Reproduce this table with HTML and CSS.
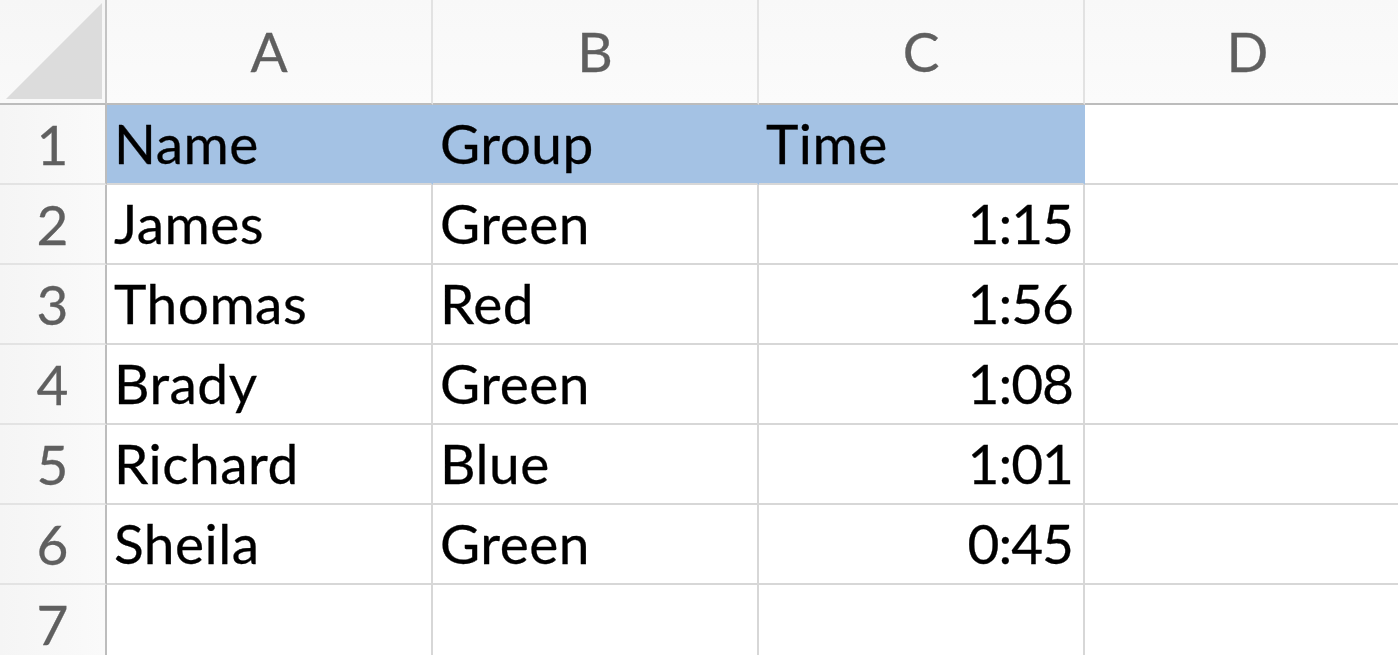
FILE: index.html
```html
<!DOCTYPE html>
<html lang="en">
<head>
<meta charset="utf-8">
<title>Sheet</title>
<link rel="stylesheet" href="styles.css">
</head>
<body>
<div class="sheet">
  <div class="corner"><svg class="tri" width="96" height="96" viewBox="0 0 96 96"><polygon points="0,96 96,0 96,96" fill="#dcdcdc"/></svg></div>
  <div class="colhead">A</div>
  <div class="colhead">B</div>
  <div class="colhead">C</div>
  <div class="colhead last">D</div>

  <div class="rowhead">1</div>
  <div class="cell fill">Name</div>
  <div class="cell fill">Group</div>
  <div class="cell fill">Time</div>
  <div class="cell last"></div>

  <div class="rowhead">2</div>
  <div class="cell">James</div>
  <div class="cell">Green</div>
  <div class="cell num">1:15</div>
  <div class="cell last"></div>

  <div class="rowhead">3</div>
  <div class="cell">Thomas</div>
  <div class="cell">Red</div>
  <div class="cell num">1:56</div>
  <div class="cell last"></div>

  <div class="rowhead">4</div>
  <div class="cell">Brady</div>
  <div class="cell">Green</div>
  <div class="cell num">1:08</div>
  <div class="cell last"></div>

  <div class="rowhead">5</div>
  <div class="cell">Richard</div>
  <div class="cell">Blue</div>
  <div class="cell num">1:01</div>
  <div class="cell last"></div>

  <div class="rowhead">6</div>
  <div class="cell">Sheila</div>
  <div class="cell">Green</div>
  <div class="cell num">0:45</div>
  <div class="cell last"></div>

  <div class="rowhead">7</div>
  <div class="cell"></div>
  <div class="cell"></div>
  <div class="cell"></div>
  <div class="cell last"></div>
</div>
</body>
</html>
```

FILE: styles.css
```css
html, body {
  margin: 0;
  padding: 0;
  background: #ffffff;
  overflow: hidden;
}
.sheet {
  display: grid;
  grid-template-columns: 107px 326px 326px 326px 1fr;
  grid-template-rows: 105px repeat(7, 80px);
  width: 1398px;
  font-family: Lato, "Liberation Sans", sans-serif;
  font-size: 55px;
}
.sheet > div {
  box-sizing: border-box;
  white-space: nowrap;
  overflow: hidden;
}
.corner {
  background: linear-gradient(#f6f6f6, #f9f9f9);
  border-right: 2px solid #c4c4c4;
  border-bottom: 2px solid #bcbcbc;
  display: flex;
  align-items: flex-start;
  justify-content: flex-start;
  padding: 3px 0 0 6px;
}
.tri {
  display: block;
}
.colhead {
  background: linear-gradient(#f8f8f8, #fbfbfb);
  border-right: 2px solid #e2e2e2;
  border-bottom: 2px solid #bcbcbc;
  color: #5f5f5f;
  text-align: center;
  line-height: 103px;
  -webkit-text-stroke: 0.3px #5f5f5f;
}
.colhead.last {
  border-right: none;
  padding-left: 12px;
}
.rowhead {
  background: linear-gradient(90deg, #f5f5f5, #fafafa);
  border-right: 2px solid #bdbdbd;
  border-bottom: 2px solid #e3e3e3;
  color: #5f5f5f;
  text-align: center;
  line-height: 78px;
  -webkit-text-stroke: 0.3px #5f5f5f;
}
.cell {
  border-right: 2px solid #d7d7d7;
  border-bottom: 2px solid #d7d7d7;
  color: #000000;
  line-height: 77px;
  padding: 0 9px 0 7px;
  letter-spacing: 0.5px;
  -webkit-text-stroke: 0.3px #000000;
}
.cell.last {
  border-right: none;
}
.cell.fill {
  background: #a4c2e4;
  border-right-color: #a4c2e4;
}
.cell.num {
  text-align: right;
  letter-spacing: -1px;
  padding-right: 10px;
}
```
